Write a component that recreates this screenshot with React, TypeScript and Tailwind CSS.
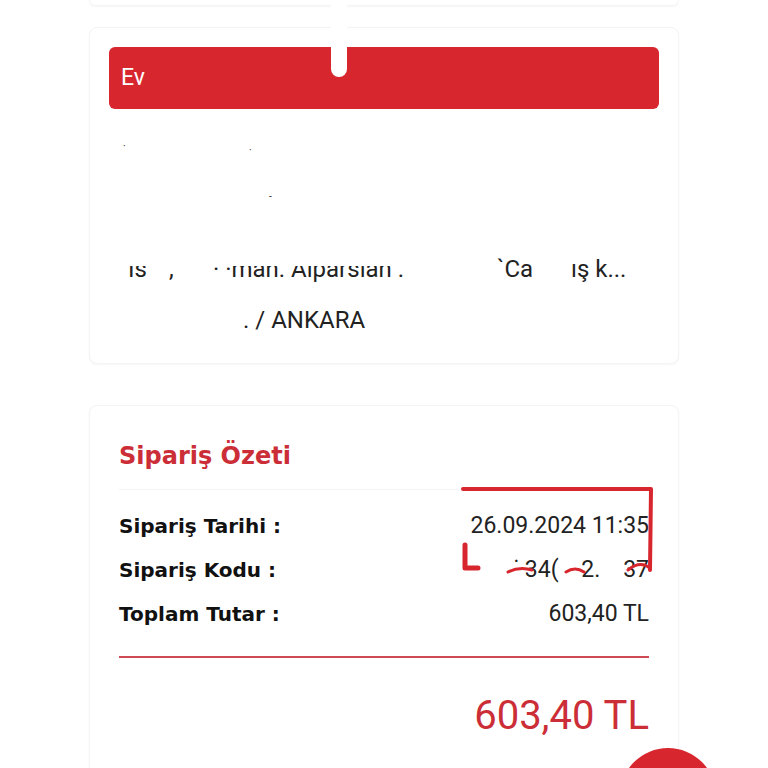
import React from 'react'

const rows = [
  { label: 'Sipariş Tarihi :', value: '26.09.2024 11:35' },
  { label: 'Sipariş Kodu :', value: '˙ 34(    2.    37' },
  { label: 'Toplam Tutar :', value: '603,40 TL' },
]

export default function App() {
  return (
    <div className="relative w-[768px] h-[768px] overflow-hidden bg-white font-['Roboto',sans-serif]">
      <div className="flex flex-col gap-[21px] px-[89px]">
        {/* previous card, only its bottom edge is on screen */}
        <div className="h-[6px] rounded-b-lg border border-t-0 border-gray-100 shadow-[0_1px_2px_rgba(0,0,0,0.04)]" />

        {/* address card */}
        <div className="flex flex-col rounded-lg border border-gray-100 bg-white px-[19px] pt-[19px] pb-[18px] shadow-[0_1px_2px_rgba(0,0,0,0.04)]">
          <div className="flex h-[62px] items-center rounded-md bg-[#d8262f] px-[12px] text-[23px] text-white">
            Ev
          </div>
          <div className="relative h-[134px] text-[22px] text-[#222]">
            <span className="absolute left-[14px] top-[30px] text-[10px]">·</span>
            <span className="absolute left-[140px] top-[34px] text-[10px]">·</span>
            <span className="absolute left-[160px] top-[80px] text-[10px]">-</span>
          </div>
          <div className="relative flex h-[51px] items-center text-[24px] text-[#222]">
            <span className="w-[60px] pl-[19px]">Is</span>
            <span className="w-[40px]">,</span>
            <span className="w-[288px] pl-[4px]">· ·mah. Alparslan .</span>
            <span className="w-[74px]">`Ca</span>
            <span>ış k...</span>
            <div className="absolute left-[10px] top-[2px] h-[21px] w-[320px] bg-white" />
          </div>
          <div className="flex h-[51px] items-center pl-[134px] text-[24px] text-[#222]">
            . / ANKARA
          </div>
        </div>

        {/* summary card */}
        <div className="mt-[20px] flex h-[400px] flex-col rounded-lg border border-gray-100 bg-white px-[29px] pt-[33px] shadow-[0_1px_2px_rgba(0,0,0,0.04)]">
          <h2 className="font-['DejaVu_Sans',sans-serif] text-[24px] font-bold leading-[34px] text-[#cc2e38]">
            Sipariş Özeti
          </h2>
          <div className="mt-[16px] h-px w-[340px] bg-gray-100" />
          <div className="mt-[14px] flex flex-col">
            {rows.map((r) => (
              <div key={r.label} className="flex h-[44px] items-center justify-between">
                <span className="font-['DejaVu_Sans',sans-serif] text-[20px] font-bold text-[#111]">{r.label}</span>
                <span className="whitespace-pre text-[23px] text-[#222]">{r.value}</span>
              </div>
            ))}
          </div>
          <div className="mt-[20px] h-[2px] bg-[#cf4a52]" />
          <div className="mt-[36px] text-right text-[40px] leading-[44px] text-[#cc2e38]">603,40 TL</div>
        </div>
      </div>

      {/* white redaction drip at top */}
      <div className="absolute left-[331px] top-0 h-[77px] w-[16px] rounded-b-full bg-white" />

      {/* red markup strokes */}
      <svg className="absolute left-0 top-0" width="768" height="768" viewBox="0 0 768 768" fill="none">
        <path d="M463 489 L651 489 L650 570" stroke="#d8262f" strokeWidth="4" strokeLinecap="round" strokeLinejoin="round" />
        <path d="M465 545 L465 568 L478 568" stroke="#d8262f" strokeWidth="5" strokeLinecap="round" strokeLinejoin="round" />
        <path d="M508 572 Q520 566 532 570 M566 572 Q575 566 584 572 M628 570 Q640 560 650 568" stroke="#d8262f" strokeWidth="3" strokeLinecap="round" />
      </svg>

      {/* floating action button peeking in */}
      <div className="absolute left-[620px] top-[748px] h-[96px] w-[96px] rounded-full bg-[#d8262f]" />
    </div>
  )
}
